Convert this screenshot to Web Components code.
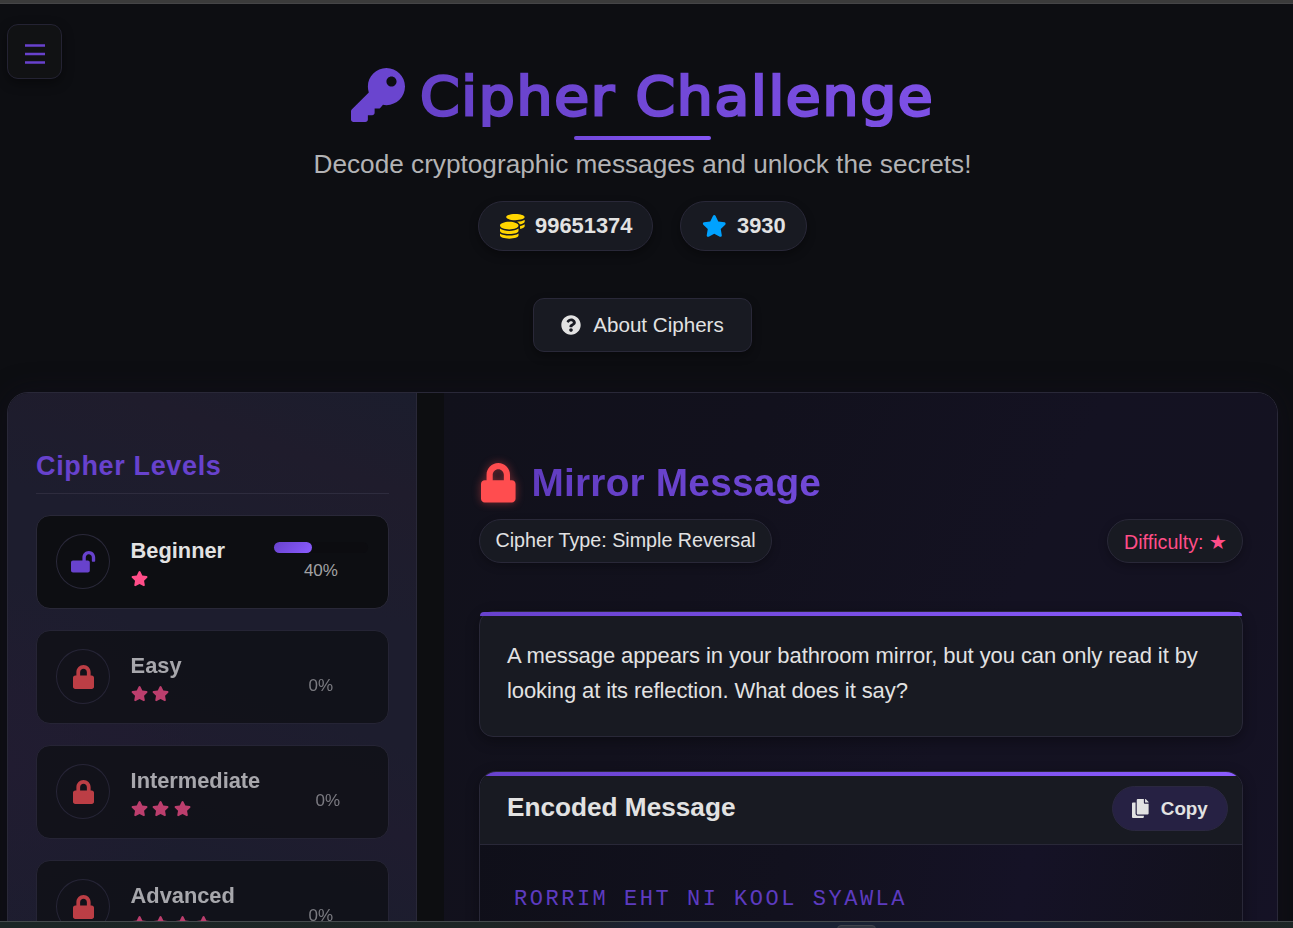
<!DOCTYPE html>
<html lang="en">
<head>
<meta charset="utf-8">
<title>Cipher Challenge</title>
<style>
html,body{margin:0;height:100%;overflow:hidden;background:#0d0e12}
body{font-family:"Liberation Sans",Arial,sans-serif;color:#e2e2e2;
--violet:#6842cd;--violet2:#8b5cff;--grad:linear-gradient(135deg,#6842cd,#8b5cff);
--line:#292838;--card:#0d0e12;--panel:#181a22;--pink:#ff4d88;--red:#ff4d4f}
</style>
</head>
<body>
<cipher-app></cipher-app>
<script>
const ICONS={
key:[512,'M512 176C512 273.2 433.2 352 336 352c-11.22 0-22.19-1.06-32.83-3.07l-24.01 27.02A24 24 0 0 1 261.22 384H224v40c0 13.26-10.75 24-24 24h-40v40c0 13.26-10.75 24-24 24H24c-13.26 0-24-10.75-24-24v-78.06c0-6.36 2.53-12.47 7.03-16.97l161.8-161.8C163.1 213.8 160 195.3 160 176 160 78.8 238.8 0 336 0 433.5 0 512 78.5 512 176zM336 128c0 26.5 21.5 48 48 48s48-21.5 48-48-21.5-48-48-48-48 21.5-48 48z'],
lock:[448,'M400 224h-24v-72C376 68.2 307.8 0 224 0S72 68.2 72 152v72H48c-26.5 0-48 21.5-48 48v192c0 26.5 21.5 48 48 48h352c26.5 0 48-21.5 48-48V272c0-26.5-21.5-48-48-48zm-104 0H152v-72c0-39.7 32.3-72 72-72s72 32.3 72 72v72z'],
open:[576,'M423.5 0C339.5.3 272 69.5 272 153.5V224H48c-26.5 0-48 21.5-48 48v192c0 26.5 21.5 48 48 48h352c26.5 0 48-21.5 48-48V272c0-26.5-21.5-48-48-48h-48v-71.1c0-39.6 31.7-72.5 71.3-72.9 40-.4 72.7 32.1 72.7 72v80c0 13.3 10.7 24 24 24h32c13.3 0 24-10.7 24-24v-80C576 68 507.5-.3 423.5 0z'],
star:[576,'M259.3 17.8L194 150.2 47.9 171.5c-26.2 3.8-36.7 36.1-17.7 54.6l105.7 103-25 145.5c-4.5 26.3 23.2 46 46.4 33.7L288 439.6l130.7 68.7c23.2 12.2 50.9-7.4 46.4-33.7l-25-145.5 105.7-103c19-18.5 8.5-50.8-17.7-54.6L382 150.2 316.7 17.8c-11.7-23.6-45.6-23.9-57.4 0z'],
help:[512,'M504 256c0 137-111 248-248 248S8 393 8 256C8 119.1 119 8 256 8s248 111.1 248 248zM262.7 90c-54.5 0-89.3 23-116.6 63.8-3.5 5.2-2.3 12.4 2.7 16.2l34.7 26.3c5.2 4 12.6 3 16.7-2.1 17.9-22.7 30.1-35.8 57.3-35.8 20.4 0 45.7 13.1 45.7 33 0 14.9-12.4 22.6-32.5 33.9C247.1 238.5 216 254.9 216 296v4c0 6.6 5.4 12 12 12h56c6.6 0 12-5.4 12-12v-1.3c0-28.5 83.2-29.7 83.2-106.7 0-58-60.2-102-116.5-102zM256 338c-25.4 0-46 20.6-46 46s20.6 46 46 46 46-20.6 46-46-20.6-46-46-46z'],
copy:[448,'M320 448v40c0 13.3-10.7 24-24 24H24c-13.3 0-24-10.7-24-24V120c0-13.3 10.7-24 24-24h72v296c0 30.9 25.1 56 56 56h168zm0-344V0H152c-13.3 0-24 10.7-24 24v368c0 13.3 10.7 24 24 24h272c13.3 0 24-10.7 24-24V128H344c-13.2 0-24-10.8-24-24zm121-31L375 7A24 24 0 0 0 358.1 0H352v96h96v-6.1a24 24 0 0 0-7-16.9z'],
coins:[512,'M0 405.3V448c0 35.3 86 64 192 64s192-28.7 192-64v-42.7C342.7 434.4 267.2 448 192 448S41.3 434.4 0 405.3zM320 128c106 0 192-28.7 192-64S426 0 320 0 128 28.7 128 64s86 64 192 64zM0 300.4V352c0 35.3 86 64 192 64s192-28.7 192-64v-51.6c-41.3 34-116.9 51.6-192 51.6S41.3 334.4 0 300.4zm416 11c57.3-11.1 96-31.7 96-55.4v-42.7c-23.2 16.4-57.3 27.6-96 34.5v63.6zM192 160C86 160 0 195.8 0 240s86 80 192 80 192-35.8 192-80-86-80-192-80zm219.3 56.3c60-10.8 100.7-32 100.7-56.3v-42.7c-35.5 25.1-96.5 38.6-160.7 41.8 29.5 14.3 51.2 33.5 60 57.2z'],
menu:[512,'M0 8h512v60H0zM0 222h512v68H0zM0 444h512v60H0z']
};
function define(name,render){
  customElements.define(name,class extends HTMLElement{
    constructor(){super();this.attachShadow({mode:'open'});}
    connectedCallback(){this.shadowRoot.innerHTML=render(this);}
  });
}
define('ui-icon',el=>{
  const [w,d]=ICONS[el.getAttribute('name')],h=+el.getAttribute('size');
  return `<style>:host{display:block;flex:none;width:${w*h/512}px;height:${h}px}svg{display:block;width:100%;height:100%;overflow:visible}</style>
  <svg viewBox="0 0 ${w} 512" fill="currentColor"><path d="${d}"/></svg>`;
});
define('menu-button',()=>`<style>
:host{position:absolute;left:7px;top:24px;width:55px;height:55px;box-sizing:border-box;display:flex;align-items:center;justify-content:center;background:#111214;border:1px solid #242333;border-radius:11px;box-shadow:0 4px 12px #0006;color:var(--violet);padding-top:4px}
</style><ui-icon name="menu" size="20"></ui-icon>`);
define('stat-pill',()=>`<style>
:host{display:flex;align-items:center;gap:10.5px;box-sizing:border-box;height:50px;padding:0 20px 0 20.5px;border:1px solid var(--line);border-radius:25px;background:var(--panel);box-shadow:0 4px 10px #0005;font-weight:bold;font-size:21.9px;line-height:48px}
</style><slot name="icon"></slot><span><slot></slot></span>`);
define('about-button',()=>`<style>
:host{display:flex;align-items:center;justify-content:center;gap:12px;box-sizing:border-box;width:219px;height:54px;border:1px solid var(--line);border-radius:11px;background:var(--panel);box-shadow:0 4px 10px #0005;font-size:20.6px}
</style><ui-icon name="help" size="20"></ui-icon><slot></slot>`);
define('page-header',()=>`<style>
:host{display:flex;flex-direction:column;align-items:center;padding-top:68px;height:324px;box-sizing:content-box}
.title{display:flex;align-items:flex-start;gap:15px;height:68px;color:#6a45cf;padding-right:0}
h1{margin:-1px 0 0;width:514px;white-space:nowrap;font:normal 53px/60px "DejaVu Sans",sans-serif;letter-spacing:1.6px;transform:scaleX(1.07);transform-origin:0 0;background:linear-gradient(90deg,#6641c8,#7f51e8);-webkit-background-clip:text;background-clip:text;color:transparent;-webkit-text-stroke:2.6px transparent}
.bar{width:137px;height:4px;border-radius:2px;background:linear-gradient(90deg,#7248db,#8556f6)}
p{margin:8px 0 0;font-size:26.2px;line-height:32px;color:#b3b3b5}
.stats{display:flex;gap:27px;margin-top:21px}
about-button{margin-top:47px}
.gold{color:#ffd500}.blue{color:#00a2ff}
</style>
<div class="title"><ui-icon name="key" size="54"></ui-icon><h1>Cipher Challenge</h1></div>
<div class="bar"></div>
<p>Decode cryptographic messages and unlock the secrets!</p>
<div class="stats"><stat-pill><ui-icon slot="icon" class="gold" name="coins" size="24.7"></ui-icon>99651374</stat-pill>
<stat-pill><ui-icon slot="icon" class="blue" name="star" size="21.8"></ui-icon>3930</stat-pill></div>
<about-button>About Ciphers</about-button>`);
define('level-card',el=>{
 const locked=el.hasAttribute('locked'),n=+el.getAttribute('stars'),p=el.getAttribute('progress');
 return `<style>
:host{display:flex;align-items:center;box-sizing:border-box;height:94px;padding:0 19.6px 0 19px;border:1px solid var(--line);border-radius:14px;background:var(--card);gap:20.6px;opacity:${locked?.7:1}}
.ring{flex:none;width:54px;height:55px;box-sizing:border-box;border:1px solid #2a293a;border-radius:50%;display:flex;align-items:center;justify-content:center;color:${locked?'var(--red)':'var(--violet)'}}
.info{flex:1 0 auto;height:54px}
.name{font-weight:bold;font-size:21.8px;line-height:31px}
.stars{display:flex;gap:4.4px;margin-top:5px;color:var(--pink)}
.prog{flex:none;width:94px;height:40px}
.track{height:11px;margin-top:.5px;border-radius:6px;background:${locked?'none':'#0c0c10'}}
.fill{width:${p}%;height:100%;border-radius:6px;background:var(--grad)}
.pct{text-align:center;font-size:17px;line-height:20px;margin-top:8px;color:#a2a2a4}
</style><div class="ring"><ui-icon name="${locked?'lock':'open'}" size="${locked?24:21.5}"></ui-icon></div>
<div class="info"><div class="name"><slot></slot></div><div class="stars">${'<ui-icon name="star" size="15.2"></ui-icon>'.repeat(n)}</div></div>
<div class="prog"><div class="track"><div class="fill"></div></div><div class="pct">${p}%</div></div>`;});
define('level-list',()=>`<style>
:host{display:block;flex:none;width:409px;box-sizing:border-box;padding:58px 27.5px 0 28px;border-right:1px solid var(--line);background:radial-gradient(circle at 0 62%,#211c31 0,#211c3100 190px),linear-gradient(200deg,#1b1d2d 0%,#1f1c2c 14%,#1d1d2e 32%,#1d1d2e 48%,#1f1c2f 60%,#1c1d2e 74%,#1d1d2f 100%)}
h2{margin:0 0 20.6px;height:42px;border-bottom:1px solid #2e2c3e;color:var(--violet);font-size:27px;line-height:30px;letter-spacing:.65px}
.list{display:flex;flex-direction:column;gap:21.1px}
</style><h2>Cipher Levels</h2><div class="list">
<level-card stars="1" progress="40">Beginner</level-card>
<level-card locked stars="2" progress="0">Easy</level-card>
<level-card locked stars="3" progress="0">Intermediate</level-card>
<level-card locked stars="4" progress="0">Advanced</level-card></div>`);
define('tag-pill',()=>`<style>
:host{display:flex;align-items:center;justify-content:center;box-sizing:border-box;height:44px;border:1px solid var(--line);border-radius:22px;background:var(--panel);font-size:19.7px;box-shadow:0 3px 8px #0004;white-space:pre}
</style><slot></slot>`);
define('story-box',()=>`<style>
:host{display:block;box-sizing:border-box;height:126px;border:1px solid var(--line);border-radius:14px;background:var(--panel);box-shadow:0 4px 14px #0005}
.bar{height:4px;border-radius:4px 4px 0 0;background:linear-gradient(90deg,#6842cd,#8b5cff)}
p{margin:22px 25px 0 27px;font-size:22px;line-height:35px;letter-spacing:-.09px}
</style><div class="bar"></div><p><slot></slot></p>`);
define('copy-button',()=>`<style>
:host{display:flex;align-items:center;justify-content:center;gap:12px;width:116px;height:45px;box-sizing:border-box;border:1px solid #2b2840;border-radius:23px;background:#262143;font-weight:bold;font-size:18.8px}
</style><ui-icon name="copy" size="19"></ui-icon><slot></slot>`);
define('encoded-box',()=>`<style>
:host{display:block;box-sizing:border-box;height:250px;border:1px solid var(--line);border-radius:17px;overflow:hidden;background:linear-gradient(100deg,#0f0f19,#12111e 40%,#151226 70%,#12111c);box-shadow:0 4px 14px #0005}
.bar{height:4px;background:linear-gradient(90deg,#6842cd,#8b5cff)}
header{display:flex;justify-content:space-between;align-items:flex-start;height:69px;box-sizing:border-box;padding:10px 14px 0 27px;background:var(--panel);border-bottom:1px solid var(--line)}
h3{margin:6px 0 0;font-size:26.2px;line-height:30px}
pre{margin:40px 0 0 34px;font:22px/30px "Liberation Mono",monospace;letter-spacing:2.52px;color:#5d3bc0}
</style><div class="bar"></div><header><h3>Encoded Message</h3><copy-button>Copy</copy-button></header><pre><slot></slot></pre>`);
define('puzzle-panel',()=>`<style>
:host{display:block;flex:1;margin-left:27px;box-sizing:border-box;padding:66px 34px 0 35px;background:linear-gradient(115deg,#11111b 0%,#12111d 30%,#141222 60%,#141221 78%,#151226 100%)}
.head{display:flex;align-items:center;height:48px;gap:16px;padding-left:2px}
.lock{color:var(--red);filter:drop-shadow(0 0 4px #ff4d4f70)}
h2{margin:0;font-size:38.8px;line-height:48px;letter-spacing:.2px;background:linear-gradient(90deg,#613cc0,#7149d8);-webkit-background-clip:text;background-clip:text;color:transparent}
.tags{display:flex;justify-content:space-between;margin:12px 0 48px}
.type{width:293px;padding-bottom:2px}.diff{width:136px;color:var(--pink);padding:2px 0 0 1px}
encoded-box{margin-top:34px}
</style>
<div class="head"><ui-icon class="lock" name="lock" size="39.5"></ui-icon><h2>Mirror Message</h2></div>
<div class="tags"><tag-pill class="type">Cipher Type: Simple Reversal</tag-pill><tag-pill class="diff">Difficulty: ★</tag-pill></div>
<story-box>A message appears in your bathroom mirror, but you can only read it by looking at its reflection. What does it say?</story-box>
<encoded-box>RORRIM EHT NI KOOL SYAWLA</encoded-box>`);
define('task-edge',()=>`<style>
:host{position:absolute;left:0;right:0;bottom:0;height:7px;box-sizing:border-box;border-top:1px solid #454a4c;background:linear-gradient(90deg,#1c2626 0,#1d2525 38%,#222123 43%,#1a2233 50%,#1a2233 80%,#222123 92%,#1d2626);display:flex}
i{margin:3px 0 0 837px;width:39px;height:5px;box-sizing:border-box;border:1px solid #40444c;border-radius:4px 4px 0 0;background:#303540}
</style><i></i>`);
define('cipher-app',()=>`<style>
:host{display:block;position:relative;box-sizing:border-box;height:928px;overflow:hidden;padding:0 15px 0 7px}
.top{position:absolute;left:0;right:0;top:0;height:4px;box-sizing:border-box;background:#3b3b3b;border-bottom:1px solid #454547}
main{display:flex;height:600px;box-sizing:border-box;border:1px solid var(--line);border-radius:21px;overflow:hidden;background:#0d0e11;box-shadow:0 0 28px #14102266}
</style><div class="top"></div><menu-button></menu-button><page-header></page-header>
<main><level-list></level-list><puzzle-panel></puzzle-panel></main><task-edge></task-edge>`);
</script>
</body>
</html>
